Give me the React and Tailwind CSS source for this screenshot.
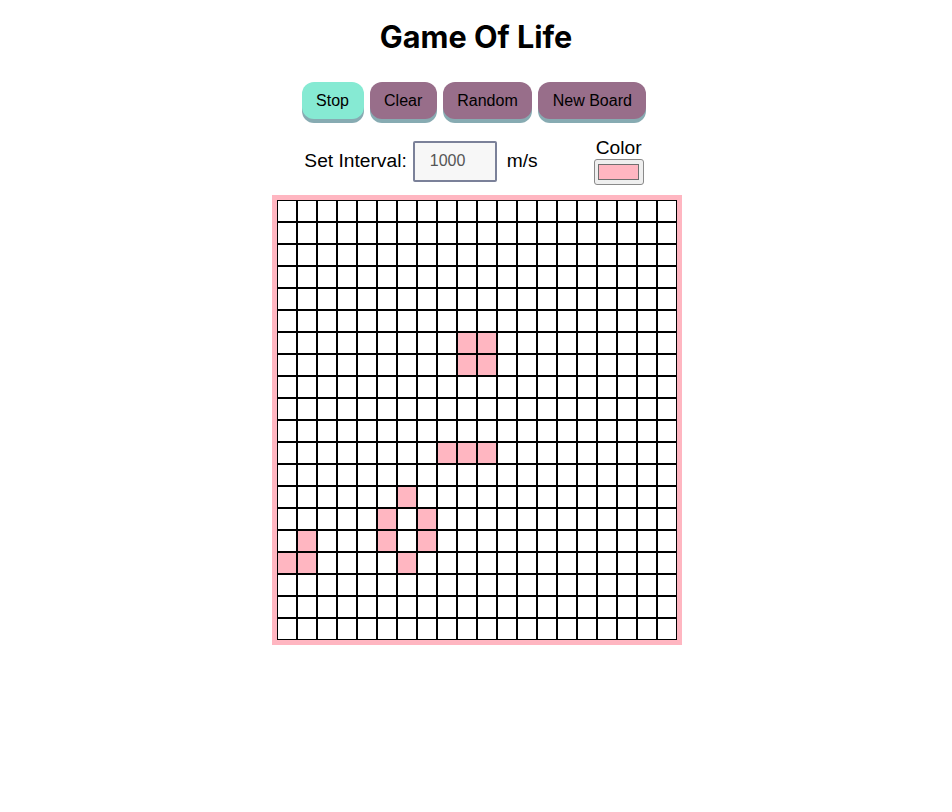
import React, { useState } from "react";

const ROWS = 20;
const COLS = 20;

// live cells in the captured frame, as "row-col"
const START = [
  "6-9", "6-10", "7-9", "7-10",
  "11-8", "11-9", "11-10",
  "13-6",
  "14-5", "14-7",
  "15-1", "15-5", "15-7",
  "16-0", "16-1", "16-6",
];

const App = () => {
  const [alive] = useState(new Set(START));
  const [interval, setIntervalValue] = useState("1000");

  const buttons = [
    { label: "Stop", cls: "bg-[#86ead3]" },
    { label: "Clear", cls: "bg-[#986e8a]" },
    { label: "Random", cls: "bg-[#986e8a]" },
    { label: "New Board", cls: "bg-[#986e8a]" },
  ];

  return (
    <div className="min-h-screen bg-white flex flex-col items-center font-['Liberation_Sans',Arial,sans-serif] text-black">
      <h1 className="mt-[19px] h-9 leading-9 text-[30.6px] font-bold font-['Inter',sans-serif]">
        Game Of Life
      </h1>

      <div className="mt-[27px] flex gap-[6px] pr-[4px]">
        {buttons.map((b) => (
          <button
            key={b.label}
            className={`${b.cls} h-[37px] px-[14.5px] rounded-[12px] text-[16px] leading-none shadow-[0_4px_0_0_#87abb2]`}
          >
            {b.label}
          </button>
        ))}
      </div>

      <div className="mt-[18px] flex items-center pr-[4px] text-[19.2px] leading-[22px]">
        <span>Set Interval:</span>
        <input
          type="text"
          value={interval}
          onChange={(e) => setIntervalValue(e.target.value)}
          className="ml-[6px] w-[84px] h-[41px] border-2 border-[#7b8199] bg-[#f7f7f7] pl-[15px] text-[16px] text-[#555] outline-none rounded-[2px]"
        />
        <span className="ml-[10px]">m/s</span>
        <div className="ml-[56px] flex flex-col items-center">
          <span>Color</span>
          <div className="w-[50px] h-[26px] border border-[#8a8a8a] bg-[#efefef] rounded-[3px] flex items-center justify-center">
            <div className="w-[41px] h-[16px] border border-[#6f6f6f] bg-[#ffb6c1]" />
          </div>
        </div>
      </div>

      <div className="mt-[10px] ml-[2px] border-[5px] border-[#ffb6c1] grid grid-cols-[repeat(20,20px)]">
        {Array.from({ length: ROWS }).map((_, r) =>
          Array.from({ length: COLS }).map((_, c) => (
            <div
              key={r + "-" + c}
              className={`w-5 h-[22px] border border-black ${
                alive.has(r + "-" + c) ? "bg-[#ffb6c1]" : "bg-white"
              }`}
            />
          ))
        )}
      </div>
    </div>
  );
};

export default App;
